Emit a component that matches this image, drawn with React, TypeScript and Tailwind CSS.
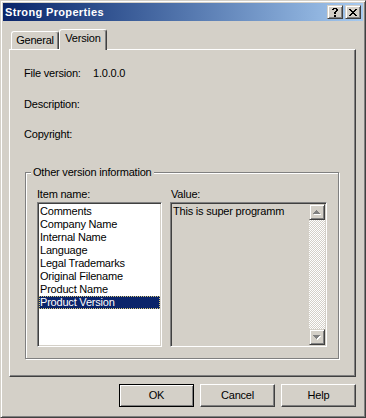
import React from 'react'

const ITEMS = [
  'Comments',
  'Company Name',
  'Internal Name',
  'Language',
  'Legal Trademarks',
  'Original Filename',
  'Product Name',
  'Product Version',
]

const HELP = [
  '.####.',
  '##..##',
  '....##',
  '...##.',
  '..##..',
  '..##..',
  '......',
  '..##..',
  '..##..',
]

const CLOSE = [
  '##....##',
  '.##..##.',
  '..####..',
  '...##...',
  '..####..',
  '.##..##.',
  '##....##',
]

const UP = [
  '...#...',
  '..###..',
  '.#####.',
  '#######',
]

const DOWN = [
  '#######',
  '.#####.',
  '..###..',
  '...#...',
]

// tiny bitmap glyphs, drawn pixel by pixel like the old Marlett font
function Pixels({ rows, color = '#000', shadow }: { rows: string[]; color?: string; shadow?: string }) {
  const w = rows[0].length + (shadow ? 1 : 0)
  const h = rows.length + (shadow ? 1 : 0)
  const cells: { x: number; y: number }[] = []
  rows.forEach((r, y) => r.split('').forEach((c, x) => { if (c === '#') cells.push({ x, y }) }))
  return (
    <svg width={w} height={h} shapeRendering="crispEdges">
      {shadow && cells.map(p => <rect key={`s${p.x}-${p.y}`} x={p.x + 1} y={p.y + 1} width={1} height={1} fill={shadow} />)}
      {cells.map(p => <rect key={`${p.x}-${p.y}`} x={p.x} y={p.y} width={1} height={1} fill={color} />)}
    </svg>
  )
}

function CaptionButton({ children }: { children: React.ReactNode }) {
  return (
    <div className="w-[16px] h-[14px] flex items-center justify-center bg-[#d4d0c8] border border-t-[#d4d0c8] border-l-[#d4d0c8] border-r-[#404040] border-b-[#404040] shadow-[inset_1px_1px_0_#fff,inset_-1px_-1px_0_#808080]">
      {children}
    </div>
  )
}

function ScrollButton({ rows }: { rows: string[] }) {
  return (
    <div className="h-[16px] shrink-0 flex items-center justify-center bg-[#d4d0c8] border border-t-[#d4d0c8] border-l-[#d4d0c8] border-r-[#404040] border-b-[#404040] shadow-[inset_1px_1px_0_#fff,inset_-1px_-1px_0_#808080]">
      <Pixels rows={rows} color="#808080" shadow="#fff" />
    </div>
  )
}

function PushButton({ label, isDefault }: { label: string; isDefault?: boolean }) {
  return (
    <div
      className={
        isDefault
          ? 'w-[75px] h-[23px] flex items-center justify-center border border-black shadow-[inset_1px_1px_0_#fff,inset_-1px_-1px_0_#808080]'
          : 'w-[75px] h-[23px] flex items-center justify-center border border-t-white border-l-white border-r-[#404040] border-b-[#404040] shadow-[inset_-1px_-1px_0_#808080]'
      }
    >
      {label}
    </div>
  )
}

export default function App() {
  return (
    <div className="w-[366px] h-[418px] flex flex-col p-[2px] bg-[#d4d0c8] text-black text-[11px] leading-[13px] tracking-[-0.2px] font-['Liberation_Sans',Arial,sans-serif] border border-t-[#d4d0c8] border-l-[#d4d0c8] border-r-[#404040] border-b-[#404040] shadow-[inset_1px_1px_0_#fff,inset_-1px_-1px_0_#808080] select-none">
      {/* caption bar */}
      <div className="h-[18px] shrink-0 flex items-center px-[2px] bg-linear-to-r from-[#0a246a] to-[#a6caf0]">
        <span className="flex-1 font-bold text-white tracking-[0.35px]">Strong Properties</span>
        <div className="flex gap-[2px]">
          <CaptionButton><Pixels rows={HELP} /></CaptionButton>
          <CaptionButton><Pixels rows={CLOSE} /></CaptionButton>
        </div>
      </div>

      {/* tabs */}
      <div className="mt-[8px] ml-[6px] h-[20px] shrink-0 flex items-end pl-[2px]">
        <div className="w-[48px] h-[18px] pt-[2px] text-center border-t border-l border-r border-t-white border-l-white border-r-[#404040] rounded-t-[3px] shadow-[inset_-1px_0_0_#808080]">
          General
        </div>
        <div className="relative z-10 -mb-px w-[48px] h-[21px] pt-[2px] text-center bg-[#d4d0c8] border-t border-l border-r border-t-white border-l-white border-r-[#404040] rounded-t-[3px] shadow-[inset_-1px_0_0_#808080]">
          Version
        </div>
      </div>

      {/* tab page */}
      <div className="ml-[6px] w-[347px] h-[328px] shrink-0 border border-t-white border-l-white border-r-[#404040] border-b-[#404040] shadow-[inset_-1px_-1px_0_#808080]">
        <div className="pl-[14px] pt-[17px]">
          <div className="flex">
            <span className="w-[69px]">File version:</span>
            <span>1.0.0.0</span>
          </div>
          <div className="mt-[18px]">Description:</div>
          <div className="mt-[17px]">Copyright:</div>
        </div>

        <div className="relative mt-[31px] ml-[15px] w-[314px] h-[187px] pt-[15px] pl-[11px] border border-[#808080] shadow-[inset_1px_1px_0_#fff,1px_1px_0_#fff]">
          <span className="absolute left-[5px] top-[-7px] px-[2px] bg-[#d4d0c8]">Other version information</span>
          <div className="flex gap-[8px]">
            <div className="w-[125px]">
              <div>Item name:</div>
              <div className="mt-px h-[145px] p-px bg-white border border-t-[#808080] border-l-[#808080] border-r-white border-b-white shadow-[inset_1px_1px_0_#404040,inset_-1px_-1px_0_#d4d0c8]">
                <div className="pt-px">
                  {ITEMS.map((t, i) => (
                    <div
                      key={t}
                      className={
                        i === ITEMS.length - 1
                          ? 'h-[13px] pl-px whitespace-nowrap bg-[#0a246a] text-white outline-1 outline-dotted outline-[#d8c878] -outline-offset-1'
                          : 'h-[13px] pl-px whitespace-nowrap'
                      }
                    >
                      {t}
                    </div>
                  ))}
                </div>
              </div>
            </div>

            <div className="w-[157px]">
              <div className="pl-px">Value:</div>
              <div className="mt-px h-[145px] p-px flex bg-[#d4d0c8] border border-t-[#808080] border-l-[#808080] border-r-white border-b-white shadow-[inset_1px_1px_0_#404040,inset_-1px_-1px_0_#d4d0c8]">
                <div className="flex-1 pl-px pt-px whitespace-nowrap overflow-hidden">This is super programm</div>
                <div className="w-[16px] flex flex-col">
                  <ScrollButton rows={UP} />
                  <div className="flex-1 bg-[repeating-conic-gradient(#ffffff_0%_25%,#d4d0c8_0%_50%)] bg-[length:2px_2px]" />
                  <ScrollButton rows={DOWN} />
                </div>
              </div>
            </div>
          </div>
        </div>
      </div>

      {/* dialog buttons */}
      <div className="mt-[7px] pr-[7px] flex justify-end gap-[6px]">
        <PushButton label="OK" isDefault />
        <PushButton label="Cancel" />
        <PushButton label="Help" />
      </div>
    </div>
  )
}
